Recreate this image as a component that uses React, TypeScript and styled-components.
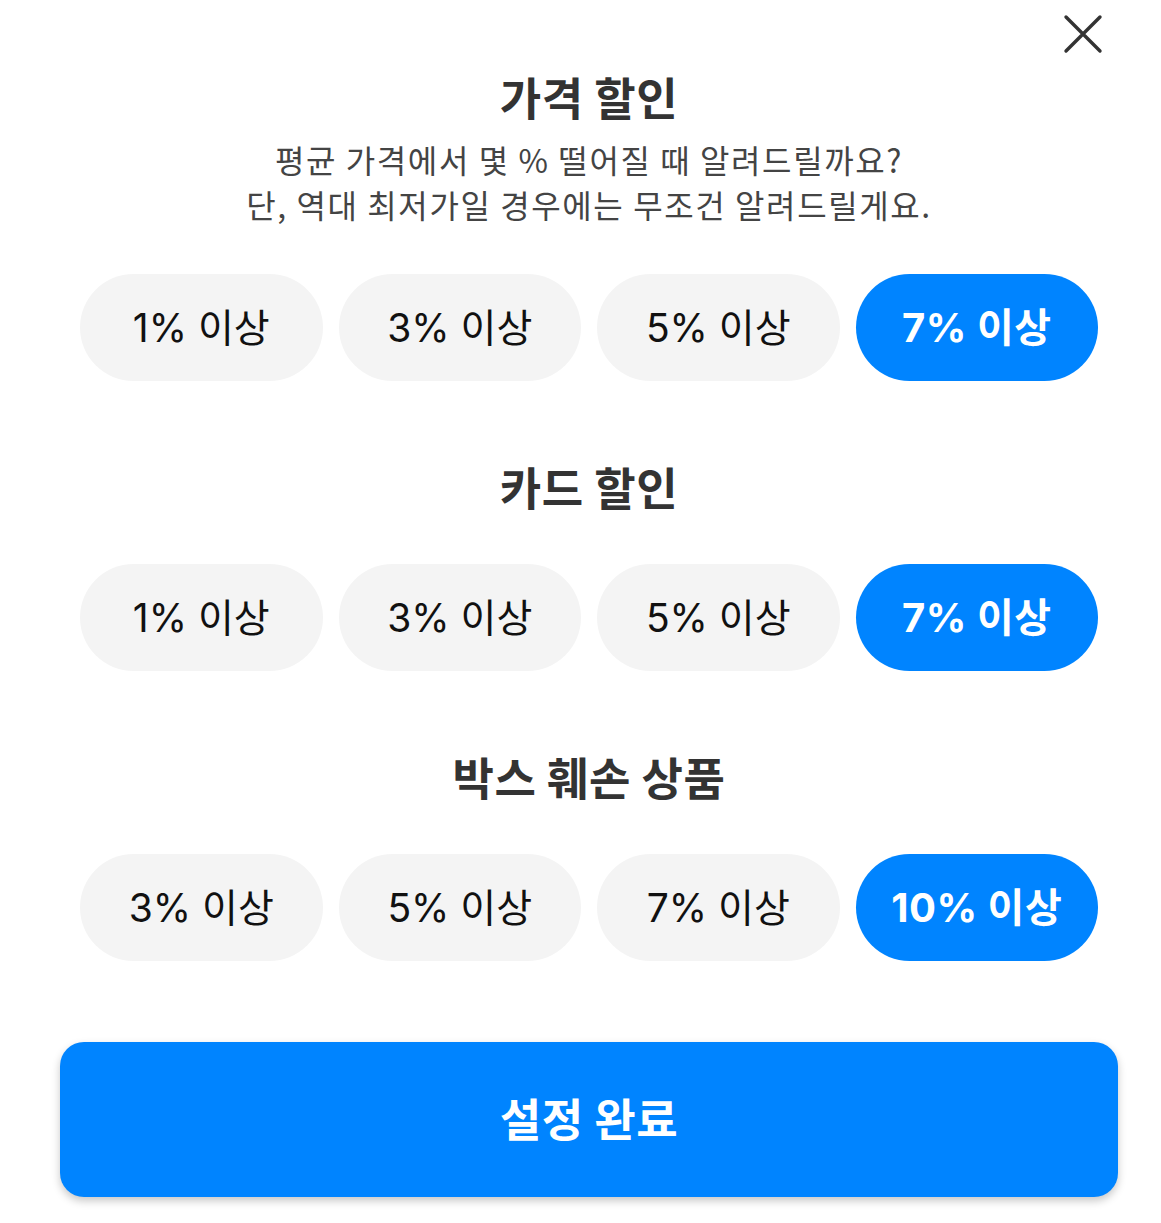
import React, { useState } from "react";
import styled, { createGlobalStyle } from "styled-components";

const GlobalStyle = createGlobalStyle`
  body {
    margin: 0;
    background: #ffffff;
    font-family: Inter, "Noto Sans CJK KR", "Noto Sans", sans-serif;
  }
`;

const Sheet = styled.div`
  position: relative;
  width: 1161px;
  box-sizing: border-box;
  padding: 67px 43px 26px 60px;
  display: flex;
  flex-direction: column;
`;

const CloseButton = styled.button`
  position: absolute;
  top: 13px;
  right: 57px;
  width: 42px;
  height: 42px;
  padding: 0;
  border: none;
  background: none;
  cursor: pointer;
  color: #333333;
`;

const Section = styled.section`
  padding: 0 20px;
  margin-bottom: 76px;

  &:last-of-type {
    margin-bottom: 81px;
  }
`;

const Header = styled.div`
  text-align: center;
  margin-bottom: 47px;
`;

const Title = styled.h2`
  margin: 0;
  font-family: "Noto Sans CJK KR", sans-serif;
  font-size: 45px;
  font-weight: 700;
  letter-spacing: 0.5px;
  line-height: 60px;
  color: #333333;
`;

const Sub = styled.p`
  margin: 10px 0 0;
  font-family: "Noto Sans CJK KR", sans-serif;
  font-size: 32px;
  font-weight: 400;
  letter-spacing: 1.6px;
  line-height: 45px;
  color: #444444;
`;

const Row = styled.div`
  display: grid;
  grid-template-columns: repeat(4, 1fr);
  gap: 16px;
`;

const Pill = styled.button<{ $active: boolean }>`
  height: 107px;
  padding: 0 0 5px;
  border: none;
  border-radius: 54px;
  background: ${(p) => (p.$active ? "#0084ff" : "#f4f4f4")};
  color: ${(p) => (p.$active ? "#ffffff" : "#111111")};
  font-family: Inter, "Noto Sans CJK KR", sans-serif;
  font-size: ${(p) => (p.$active ? "40px" : "39px")};
  font-weight: ${(p) => (p.$active ? 700 : 400)};
  letter-spacing: ${(p) => (p.$active ? "0.5px" : "0")};
  cursor: pointer;
`;

const Submit = styled.button`
  height: 155px;
  padding: 0 0 4px;
  border: none;
  border-radius: 24px;
  background: #0084ff;
  color: #ffffff;
  font-family: "Noto Sans CJK KR", sans-serif;
  font-size: 45px;
  font-weight: 700;
  letter-spacing: 0.5px;
  box-shadow: 0 4px 8px rgba(0, 0, 0, 0.22);
  cursor: pointer;
`;

interface Group {
  title: string;
  sub?: string[];
  options: number[];
}

const groups: Group[] = [
  {
    title: "가격 할인",
    sub: [
      "평균 가격에서 몇 % 떨어질 때 알려드릴까요?",
      "단, 역대 최저가일 경우에는 무조건 알려드릴게요.",
    ],
    options: [1, 3, 5, 7],
  },
  { title: "카드 할인", options: [1, 3, 5, 7] },
  { title: "박스 훼손 상품", options: [3, 5, 7, 10] },
];

const App: React.FC = () => {
  const [picked, setPicked] = useState<number[]>([7, 7, 10]);

  return (
    <Sheet>
      <GlobalStyle />
      <CloseButton aria-label="닫기">
        <svg width="42" height="42" viewBox="0 0 42 42">
          <path
            d="M4 4 L38 38 M38 4 L4 38"
            stroke="currentColor"
            strokeWidth="3.4"
            strokeLinecap="round"
          />
        </svg>
      </CloseButton>
      {groups.map((g, gi) => (
        <Section key={g.title}>
          <Header>
            <Title>{g.title}</Title>
            {g.sub && (
              <Sub>
                {g.sub[0]}
                <br />
                {g.sub[1]}
              </Sub>
            )}
          </Header>
          <Row>
            {g.options.map((v) => (
              <Pill
                key={v}
                $active={picked[gi] === v}
                onClick={() =>
                  setPicked((prev) => prev.map((p, i) => (i === gi ? v : p)))
                }
              >
                {v}% 이상
              </Pill>
            ))}
          </Row>
        </Section>
      ))}
      <Submit>설정 완료</Submit>
    </Sheet>
  );
};

export default App;
